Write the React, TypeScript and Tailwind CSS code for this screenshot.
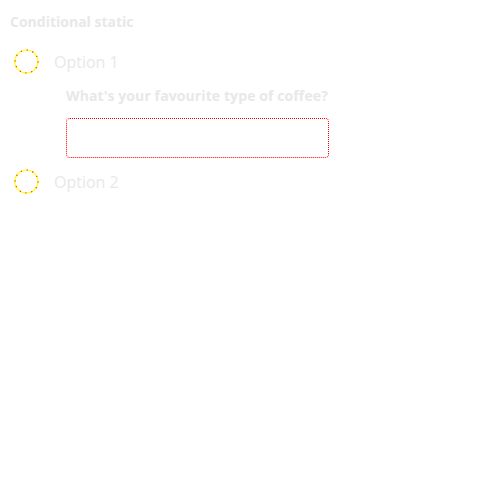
import React from "react";

function Radio() {
  return (
    <svg width="25" height="25" viewBox="0 0 25 25" className="shrink-0">
      <circle cx="12.5" cy="12.5" r="11.5" fill="none" stroke="#ffff00" strokeWidth="1.2" />
      <circle cx="12.5" cy="12.5" r="11.5" fill="none" stroke="#ff0000" strokeWidth="1.2" strokeDasharray="1 5" />
    </svg>
  );
}

export default function App() {
  return (
    <div
      className="w-[500px] h-[500px] bg-white text-[#e8e8e8]"
      style={{ fontFamily: '"Open Sans", "Noto Sans", sans-serif' }}
    >
      <div className="px-[10px] pt-[12px]">
        <div className="text-[14px] font-bold leading-[20px]">Conditional static</div>
        <div className="mt-[17px] flex items-center gap-[15px] pl-[4px]">
          <Radio />
          <span className="text-[16px] leading-[24px]">Option 1</span>
        </div>
        <div className="ml-[56px] mt-[12px]">
          <div className="text-[14px] font-bold leading-[20px] tracking-[0.1px]">What's your favourite type of coffee?</div>
          <div className="mt-[12px] w-[263px] h-[40px] rounded-[4px] border border-dotted border-[#ff0000]" />
        </div>
        <div className="mt-[11px] flex items-center gap-[15px] pl-[4px]">
          <Radio />
          <span className="text-[16px] leading-[24px]">Option 2</span>
        </div>
      </div>
    </div>
  );
}
